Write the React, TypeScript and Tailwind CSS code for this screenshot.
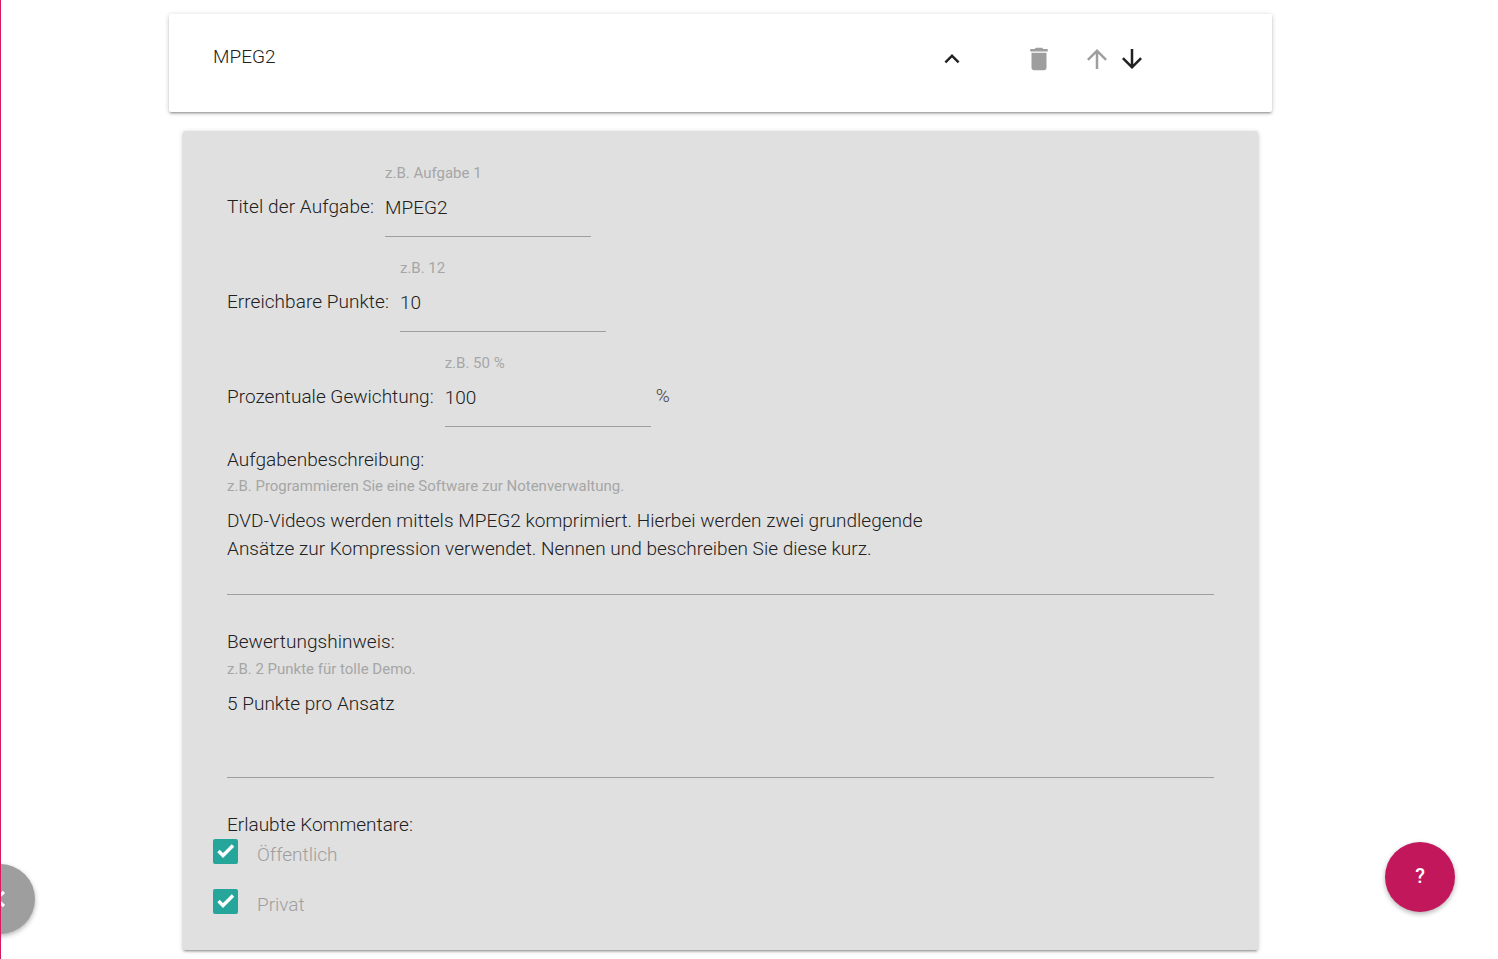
function Icon({ d, size = 30, className = "" }: { d: string; size?: number; className?: string }) {
  return (
    <svg viewBox="0 0 24 24" width={size} height={size} fill="currentColor" className={`shrink-0 ${className}`}>
      <path d={d} />
    </svg>
  );
}

function InlineField({ label, hint, value, suffix, track }: { label: string; hint: string; value: string; suffix?: string; track: string }) {
  return (
    <div className="flex h-[95px] items-start">
      <div className={`mt-[31px] mr-[11px] text-[19px] leading-[24px] text-[#212121] ${track}`}>{label}</div>
      <div className="w-[206px] h-[73px] border-b border-[#9e9e9e]">
        <div className="text-[15px] font-normal leading-[18px] text-[#a6a6a6]">{hint}</div>
        <div className="mt-[14px] text-[19px] leading-[24px] text-[#212121]">{value}</div>
      </div>
      {suffix && <div className="ml-[5px] mt-[30px] text-[19px] leading-[24px] text-[#424242]">{suffix}</div>}
    </div>
  );
}

function AreaField({ label, hint, lines, hintGap }: { label: string; hint: string; lines: string[]; hintGap: string }) {
  return (
    <div>
      <div className="text-[19px] tracking-[0.05px] leading-[24px] text-[#212121]">{label}</div>
      <div className={`text-[15px] font-normal leading-[18px] text-[#a6a6a6] ${hintGap}`}>{hint}</div>
      <div className="mt-[12px] h-[88px] border-b border-[#9e9e9e] text-[19px] tracking-[0.02px] leading-[28px] text-[#212121]">
        {lines.map((l) => (
          <div key={l}>{l}</div>
        ))}
      </div>
    </div>
  );
}

function Check({ label, className = "" }: { label: string; className?: string }) {
  return (
    <div className={`flex items-center ${className}`}>
      <div className="w-[25px] h-[25px] rounded-[2px] bg-[#26a69a]">
        <svg viewBox="0 0 25 25" width={25} height={25} fill="none" stroke="#fff" strokeWidth={3.4}>
          <path d="M5.5 12L10 16.5 20 6.5" />
        </svg>
      </div>
      <div className="ml-[19px] mt-[7px] text-[19px] leading-[24px] text-[#9e9e9e]">{label}</div>
    </div>
  );
}

export default function App() {
  return (
    <div
      className="relative h-[959px] overflow-hidden bg-white border-l border-[#d81b60] font-light"
      style={{ fontFamily: "Roboto, 'Noto Sans', sans-serif" }}
    >
      <div className="ml-[168px] w-[1103px] pt-[14px]">
        <div className="h-[98px] rounded-[2px] bg-white shadow-[0_2px_2px_0_rgba(0,0,0,0.14),0_3px_1px_-2px_rgba(0,0,0,0.12),0_1px_5px_0_rgba(0,0,0,0.2)] flex items-start pl-[44px]">
          <div className="mt-[31px] w-[724px] text-[19px] leading-[24px] text-[#212121]">MPEG2</div>
          <div className="mt-[30px] flex items-center">
            <Icon d="M7.41 15.41L12 10.83l4.59 4.58L18 14l-6-6-6 6z" className="text-[#212121]" />
            <Icon d="M6 19c0 1.1.9 2 2 2h8c1.1 0 2-.9 2-2V7H6v12zM19 4h-3.5l-1-1h-5l-1 1H5v2h14V4z" className="ml-[57px] text-[#9e9e9e]" />
            <Icon d="M4 12l1.41 1.41L11 7.83V20h2V7.83l5.58 5.59L20 12l-8-8-8 8z" className="ml-[28px] text-[#9e9e9e]" />
            <Icon d="M20 12l-1.41-1.41L13 16.17V4h-2v12.17l-5.58-5.59L4 12l8 8 8-8z" className="ml-[4.5px] text-[#212121]" />
          </div>
        </div>

        <div className="mt-[19px] mx-[14px] h-[819px] rounded-[2px] bg-[#e0e0e0] shadow-[0_2px_2px_0_rgba(0,0,0,0.14),0_3px_1px_-2px_rgba(0,0,0,0.12),0_1px_5px_0_rgba(0,0,0,0.2)] pt-[33px] px-[44px]">
          <InlineField label="Titel der Aufgabe:" hint="z.B. Aufgabe 1" value="MPEG2" track="tracking-[0.1px]" />
          <InlineField label="Erreichbare Punkte:" hint="z.B. 12" value="10" track="tracking-[0.05px]" />
          <InlineField label="Prozentuale Gewichtung:" hint="z.B. 50 %" value="100" suffix="%" track="tracking-[0.01px]" />
          <div className="-mt-[1px]">
            <AreaField
              label="Aufgabenbeschreibung:"
              hint="z.B. Programmieren Sie eine Software zur Notenverwaltung."
              hintGap="mt-[5px]"
              lines={[
                "DVD-Videos werden mittels MPEG2 komprimiert. Hierbei werden zwei grundlegende",
                "Ansätze zur Kompression verwendet. Nennen und beschreiben Sie diese kurz.",
              ]}
            />
          </div>
          <div className="mt-[35px]">
            <AreaField
              label="Bewertungshinweis:"
              hint="z.B. 2 Punkte für tolle Demo."
              hintGap="mt-[6px]"
              lines={["5 Punkte pro Ansatz"]}
            />
          </div>
          <div className="mt-[35px] text-[19px] leading-[24px] text-[#212121]">Erlaubte Kommentare:</div>
          <Check label="Öffentlich" className="-ml-[14px] -mt-[1px]" />
          <Check label="Privat" className="-ml-[14px] mt-[19px]" />
        </div>
      </div>

      <div className="absolute left-[-36px] top-[864px] w-[70px] h-[70px] rounded-full bg-[#9e9e9e] shadow-[0_2px_5px_rgba(0,0,0,0.3)] flex items-center justify-end">
        <svg viewBox="0 0 14 18" width={14} height={18} fill="none" stroke="#fff" strokeWidth={3.2} className="mr-[29px]">
          <path d="M12 2L4 9l8 7" />
        </svg>
      </div>

      <div className="absolute left-[1384px] top-[842px] w-[70px] h-[70px] rounded-full bg-[#c2185b] shadow-[0_2px_5px_rgba(0,0,0,0.3)] flex items-center justify-center text-white text-[20px] font-medium">
        <span className="-translate-y-[1px]">?</span>
      </div>
    </div>
  );
}
